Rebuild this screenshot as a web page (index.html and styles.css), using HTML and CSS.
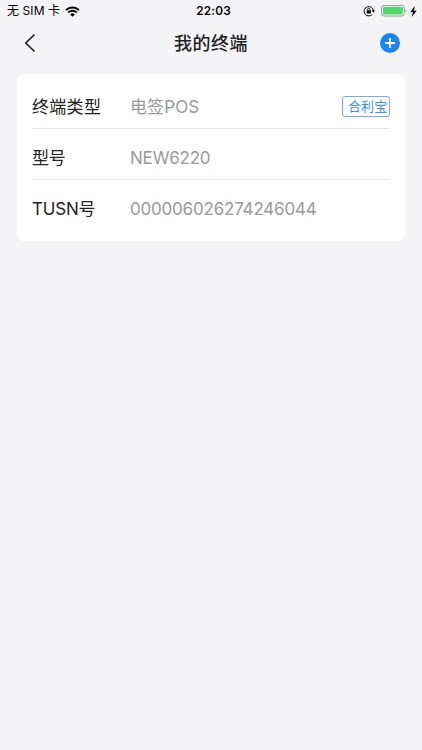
FILE: index.html
```html
<!DOCTYPE html>
<html lang="zh-CN">
<head>
    <meta charset="UTF-8">
    <meta name="viewport" content="width=device-width, initial-scale=1.0">
    <title>我的终端</title>
    <link rel="stylesheet" href="styles.css">
</head>
<body>

<div class="status-bar">
    <div class="status-left">
        <span class="carrier">无 SIM 卡</span>
        <svg class="wifi" width="15" height="11" viewBox="0 0 15 11">
            <path d="M1 4.1a9.2 9.2 0 0 1 13 0M3.3 6.5a6 6 0 0 1 8.4 0" fill="none" stroke="#000" stroke-width="2"/>
            <path d="M7.5 10.8L5.1 8.4a3.4 3.4 0 0 1 4.8 0z" fill="#000"/>
        </svg>
    </div>
    <div class="time">22:03</div>
    <div class="status-right">
        <svg width="12" height="12" viewBox="0 0 12 12">
            <path d="M9.1 9.6A4.7 4.7 0 1 1 10.5 6" fill="none" stroke="#000" stroke-width="1"/>
            <path d="M8.8 5.5h3.2L10.4 7.8z" fill="#000"/>
            <rect x="3.7" y="5.3" width="4.2" height="3.2" rx=".4" fill="#000"/>
            <path d="M4.6 5.5V4.4a1.2 1.2 0 0 1 2.4 0v1.1" fill="none" stroke="#000" stroke-width=".8"/>
        </svg>
        <svg class="battery" width="26" height="12" viewBox="0 0 26 12">
            <rect x=".5" y=".5" width="22.8" height="10.5" rx="2.5" fill="none" stroke="#9a9a9d"/>
            <rect x="2" y="2" width="19.8" height="7.5" rx="1" fill="#4cd964"/>
            <path d="M24.5 4v3.6c1.4-.6 1.4-3 0-3.6z" fill="#9a9a9d"/>
        </svg>
        <svg class="bolt" width="7" height="11" viewBox="0 0 7 11">
            <path d="M4.8 0L.3 6h2.6L1.8 11 6.7 4.7H4z" fill="#000"/>
        </svg>
    </div>
</div>

<div class="nav-bar">
    <svg class="back" width="12" height="20" viewBox="0 0 12 20">
        <path d="M10.5 1.5L1.8 10l8.7 8.5" fill="none" stroke="#222" stroke-width="1.7"/>
    </svg>
    <h1>我的终端</h1>
    <svg class="add" width="20" height="20" viewBox="0 0 20 20">
        <circle cx="10" cy="10" r="10" fill="#1985f8"/>
        <path d="M10 5v10M5 10h10" stroke="#fff" stroke-width="1.8"/>
    </svg>
</div>

<div class="card">
    <div class="row">
        <span class="label wide">终端类型</span>
        <span class="value type">电签POS</span>
        <span class="tag">合利宝</span>
    </div>
    <div class="row">
        <span class="label">型号</span>
        <span class="value">NEW6220</span>
    </div>
    <div class="row">
        <span class="label">TUSN号</span>
        <span class="value">000006026274246044</span>
    </div>
</div>

</body>
</html>
```

FILE: styles.css
```css
* {
    box-sizing: border-box;
}
body {
    font-family: Inter, "Noto Sans CJK SC", sans-serif;
    background-color: #f4f4f7;
    color: #222;
    margin: 0;
    min-height: 750px;
}
svg {
    display: block;
    flex-shrink: 0;
}
.status-bar {
    display: grid;
    grid-template-columns: 1fr auto 1fr;
    align-items: center;
    height: 22px;
    padding: 0 5px 0 7px;
    font-size: 12px;
    line-height: 22px;
    color: #000;
}
.status-left,
.status-right {
    display: flex;
    align-items: center;
}
.status-right {
    justify-content: flex-end;
}
.carrier {
    letter-spacing: 0.1px;
}
.wifi {
    margin-left: 5px;
}
.time {
    padding-left: 3px;
    font-size: 11.8px;
    font-weight: 600;
    letter-spacing: 0.2px;
}
.battery {
    margin-left: 6px;
}
.bolt {
    margin-left: 3px;
}
.nav-bar {
    display: grid;
    grid-template-columns: 1fr auto 1fr;
    align-items: center;
    height: 42px;
    padding: 0 22px;
}
.back {
    margin-left: 2px;
}
.nav-bar h1 {
    margin: 0;
    padding-top: 1px;
    font-size: 18px;
    font-weight: 500;
    line-height: 41px;
    letter-spacing: 0.5px;
}
.add {
    justify-self: end;
}
.card {
    height: 167px;
    margin: 10px 17px 0;
    padding: 4px 15px 0;
    background-color: #fff;
    border-radius: 7px;
}
.row {
    display: flex;
    align-items: center;
    height: 51px;
    padding-top: 7px;
    border-bottom: 1px solid #e9e9ea;
    font-size: 17px;
    line-height: 24px;
    letter-spacing: -0.2px;
}
.row:last-child {
    border-bottom: none;
}
.label {
    width: 98px;
}
.value {
    flex: 1;
    color: #999;
}
.row .wide {
    letter-spacing: 0.3px;
}
.row .type {
    letter-spacing: 0.1px;
}
.tag {
    width: 48px;
    height: 21px;
    padding-left: 5px;
    border: 1px solid #72aef5;
    border-radius: 3px;
    color: #3d8ff0;
    font-size: 13px;
    line-height: 19px;
    letter-spacing: 0.1px;
    white-space: nowrap;
}
```
